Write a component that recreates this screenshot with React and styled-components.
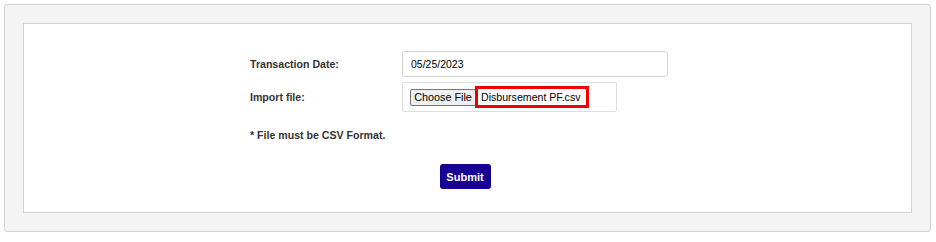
import styled, { createGlobalStyle } from "styled-components";

const GlobalStyle = createGlobalStyle`
  body {
    margin: 0;
    font-family: "Liberation Sans", Arial, sans-serif;
    background: #ffffff;
  }
`;

const Outer = styled.div`
  margin: 4px 5px 0 4px;
  padding: 18px;
  background: #f4f4f4;
  border: 1px solid #d3d3d3;
  border-radius: 3px;
`;

const Panel = styled.div`
  background: #ffffff;
  border: 1px solid #d3d3d3;
  height: 190px;
  box-sizing: border-box;
  padding-top: 27px;
`;

const Form = styled.div`
  width: 444px;
  margin: 0 auto;
  display: grid;
  grid-template-columns: 152px auto;
  row-gap: 5px;
  align-items: center;
  padding-left: 9px;
`;

const Label = styled.div`
  font-size: 10.6px;
  font-weight: bold;
  color: #333333;
`;

const DateInput = styled.div`
  width: 266px;
  height: 26px;
  box-sizing: border-box;
  border: 1px solid #d4d4d4;
  border-radius: 3px;
  padding-left: 8px;
  display: flex;
  align-items: center;
  font-size: 10.5px;
  color: #000;
`;

const FileBox = styled.div`
  width: 215px;
  height: 30px;
  box-sizing: border-box;
  border: 1px solid #dddddd;
  border-radius: 2px;
  padding: 0 7px;
  display: flex;
  align-items: center;
  white-space: nowrap;
`;

const ChooseButton = styled.span`
  flex-shrink: 0;
  width: 66px;
  height: 17px;
  box-sizing: border-box;
  text-align: center;
  background: #efefef;
  border: 1px solid #767676;
  border-radius: 2px;
  font-size: 10.8px;
  line-height: 15px;
  color: #000;
`;

const FileName = styled.span`
  flex-shrink: 0;
  margin-left: -1px;
  width: 114px;
  height: 22px;
  box-sizing: border-box;
  border: 3px solid #f00000;
  padding-left: 3px;
  font-size: 10.6px;
  line-height: 16px;
  color: #000;
`;

const Note = styled.div`
  grid-column: 1 / span 2;
  margin-top: 12px;
  font-size: 10.6px;
  font-weight: bold;
  color: #333333;
`;

const Actions = styled.div`
  display: flex;
  justify-content: center;
  margin-top: 23px;
  padding-right: 5px;
`;

const SubmitButton = styled.button`
  width: 51px;
  height: 25px;
  border: none;
  border-radius: 3px;
  background: #170092;
  color: #ffffff;
  font-family: "Liberation Sans", Arial, sans-serif;
  font-size: 11px;
  font-weight: bold;
  padding: 0;
`;

export default function App() {
  return (
    <>
      <GlobalStyle />
      <Outer>
        <Panel>
          <Form>
            <Label>Transaction Date:</Label>
            <DateInput>05/25/2023</DateInput>
            <Label>Import file:</Label>
            <FileBox>
              <ChooseButton>Choose File</ChooseButton>
              <FileName>Disbursement PF.csv</FileName>
            </FileBox>
            <Note>* File must be CSV Format.</Note>
          </Form>
          <Actions>
            <SubmitButton>Submit</SubmitButton>
          </Actions>
        </Panel>
      </Outer>
    </>
  );
}
